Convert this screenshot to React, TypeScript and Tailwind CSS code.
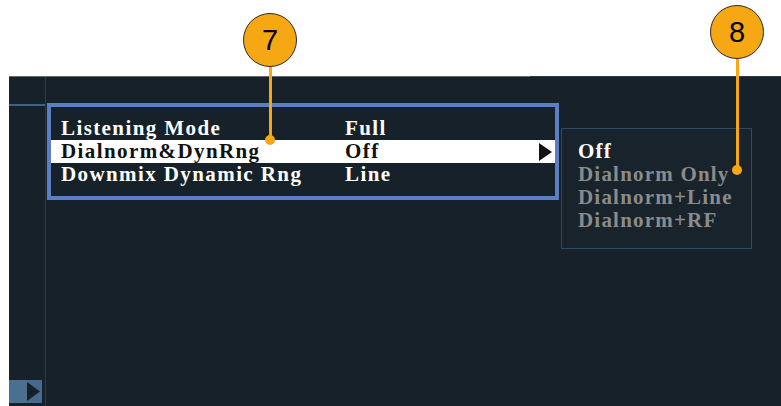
import React from "react";

const serif = { fontFamily: '"Liberation Serif", "DejaVu Serif", serif' };

const rows = [
  { label: "Listening Mode", value: "Full", active: false },
  { label: "Dialnorm&DynRng", value: "Off", active: true },
  { label: "Downmix Dynamic Rng", value: "Line", active: false },
];

const options = [
  { text: "Off", active: true },
  { text: "Dialnorm Only", active: false },
  { text: "Dialnorm+Line", active: false },
  { text: "Dialnorm+RF", active: false },
];

function Callout({ n, className, lineH }: { n: string; className: string; lineH: number }) {
  return (
    <div className={"absolute flex flex-col items-center " + className}>
      <div
        className="w-[54px] h-[54px] rounded-full bg-[#f6a714] border border-[#2b2b2b] flex items-center justify-center text-[29px] text-black leading-none"
        style={{ fontFamily: '"Liberation Sans", Arial, sans-serif' }}
      >
        {n}
      </div>
      <div className="w-[3px] bg-[#f6a714]" style={{ height: lineH }} />
      <div className="w-[10px] h-[10px] rounded-full bg-[#f6a714] -mt-[5px]" />
    </div>
  );
}

export default function App() {
  return (
    <div className="relative w-[781px] h-[406px] bg-white flex flex-col overflow-hidden">
      <div className="h-[76px] shrink-0" />
      <div className="flex-1 ml-[9px] bg-[#172129] flex flex-col">
        {/* top edge */}
        <div className="flex h-[1px] shrink-0">
          <div className="w-[521px] bg-[#666c6d]" />
          <div className="flex-1 bg-[#2b3d4b]" />
        </div>
        <div className="flex-1 flex">
          {/* left rail */}
          <div className="w-[37px] shrink-0 border-r border-[#2a3c4a] flex flex-col">
            <div className="mt-[27px] h-[2px] bg-[#3f6282]" />
            <div className="flex-1" />
            <div className="mb-[3px] w-[33px] h-[23px] bg-[#4b6f91] flex justify-end">
              <div className="w-[15px] h-full bg-[#466a8b] flex items-center">
                <svg width="14" height="19" viewBox="0 0 14 19">
                  <polygon points="0,0 13,9.5 0,19" fill="#15202a" />
                </svg>
              </div>
            </div>
          </div>

          {/* main area */}
          <div className="flex-1 flex items-start pt-[26px] pl-[1px]">
            <div className="w-[512px] h-[97px] border-4 border-[#5a7fc4] py-[10px]" style={serif}>
              {rows.map((r) => (
                <div
                  key={r.label}
                  className={
                    "h-[23px] flex items-center pl-[10px] text-[21px] font-bold tracking-[1.4px] leading-none " +
                    (r.active ? "bg-white text-[#111]" : "text-white")
                  }
                >
                  <span className="w-[284px] shrink-0">{r.label}</span>
                  <span className="flex-1">{r.value}</span>
                  {r.active && (
                    <svg width="14" height="18" viewBox="0 0 14 18" className="mr-[2px]">
                      <polygon points="0,0 13,9 0,18" fill="#111" />
                    </svg>
                  )}
                </div>
              ))}
            </div>

            <div
              className="ml-[2px] mt-[25px] w-[191px] h-[121px] border border-[#2e4a64] bg-[#18232b] pt-[11px] pl-[16px]"
              style={serif}
            >
              {options.map((o) => (
                <div
                  key={o.text}
                  className={
                    "h-[23px] flex items-center text-[21px] font-bold tracking-[1.2px] leading-none whitespace-nowrap " +
                    (o.active ? "text-white" : "text-[#8b8b8b]")
                  }
                >
                  {o.text}
                </div>
              ))}
            </div>
          </div>
        </div>
      </div>

      <Callout n="7" className="left-[243px] top-[13px]" lineH={73} />
      <Callout n="8" className="left-[710px] top-[5px]" lineH={111} />
    </div>
  );
}
